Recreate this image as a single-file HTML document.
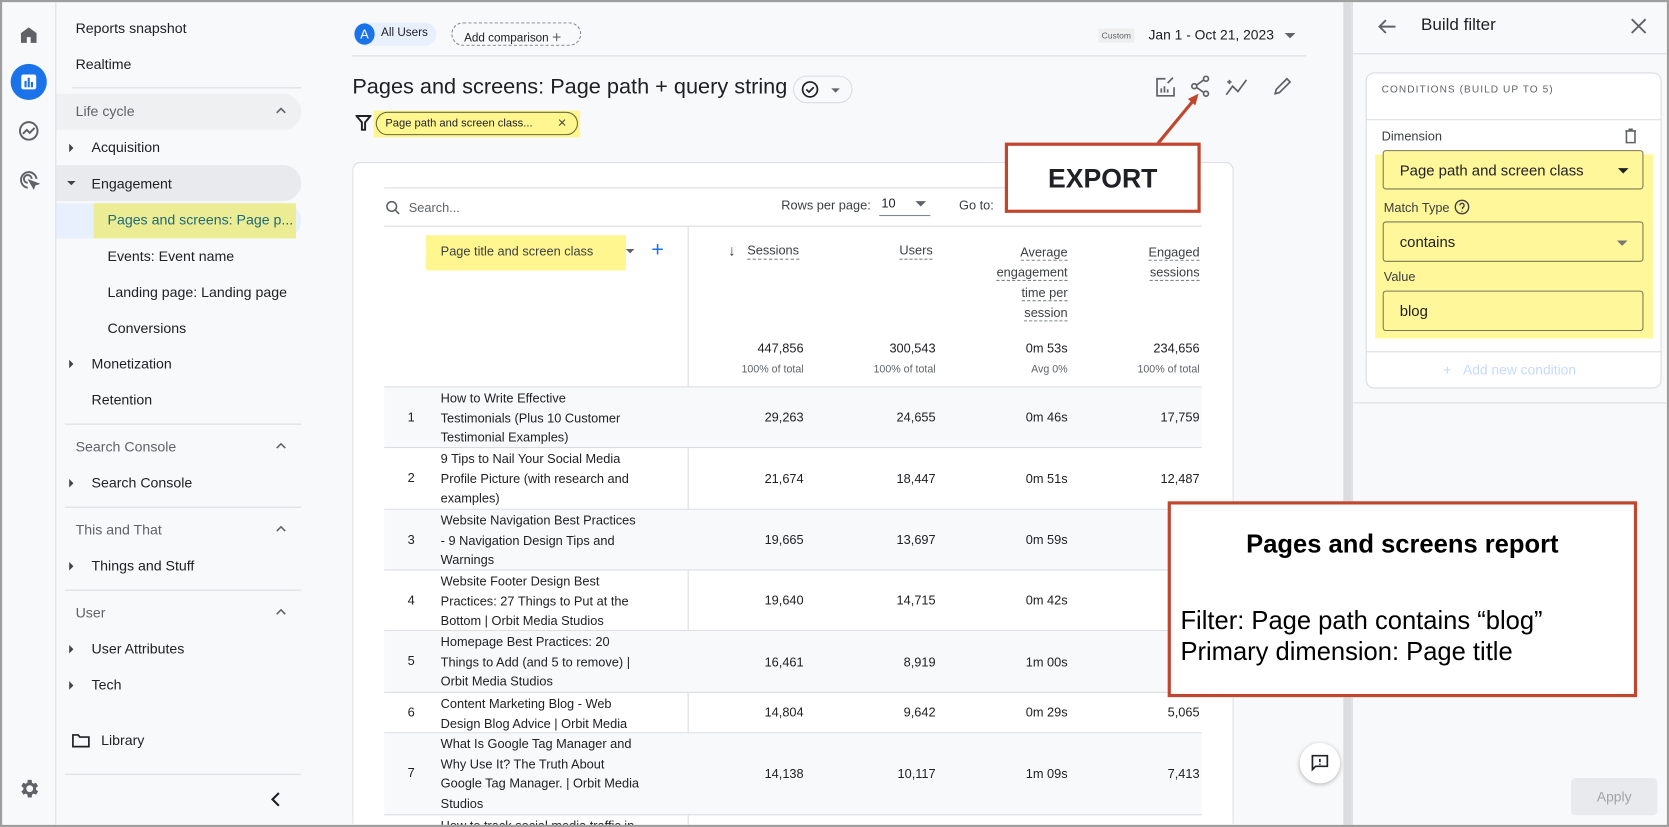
<!DOCTYPE html>
<html><head><meta charset="utf-8"><style>
*{box-sizing:border-box;margin:0;padding:0}
html,body{width:1669px;height:827px;overflow:hidden}
body{font-family:"Liberation Sans",sans-serif;color:#202124;background:#f8f9fa;position:relative}
#wrap{position:absolute;left:0;top:0;width:1568px;height:777px;transform:scale(1.06442,1.06435);transform-origin:0 0;overflow:hidden;background:#f8f9fa}
.abs{position:absolute}
.frame{position:absolute;left:0;top:0;width:1568px;height:777px;border:2px solid #9e9e9e;pointer-events:none;z-index:50}
.nav{left:2px;top:2px;width:51px;height:773px;background:#f8f9fa;border-right:1px solid #dadce0}
.side{left:53px;top:2px;width:240px;height:773px;background:#f8f9fa}
.si{position:absolute;font-size:13.3px;color:#202124}
.sh{position:absolute;font-size:13.3px;color:#5f6368}
.tri{position:absolute;width:0;height:0}
.hr{position:absolute;height:1px;background:#dadce0}
.card{left:331px;top:152px;width:828px;height:622px;background:#fff;border:1px solid #dadce0;border-bottom:none;border-radius:8px 8px 0 0}
.t{position:absolute;font-size:12px;color:#202124}
.r{text-align:right}
.row{position:absolute;left:361px;width:768px;border-bottom:1px solid #dadce0}
.ttl{position:absolute;left:53px;font-size:12px;line-height:18.7px;white-space:nowrap}
.num{position:absolute;font-size:12px;text-align:right;width:100px}
.dash{border-bottom:1px dashed #80868b}
</style></head><body><div id="wrap">

<div class="abs nav">
 <svg class="abs" style="left:14px;top:20px" width="22" height="22" viewBox="0 0 24 24"><path d="M4 20V10l8-6 8 6v10h-6v-6h-4v6z" fill="#5f6368"/></svg>
 <div class="abs" style="left:8px;top:58px;width:34px;height:34px;border-radius:50%;background:#1a73e8"></div>
 <svg class="abs" style="left:15px;top:65px" width="20" height="20" viewBox="0 0 20 20"><rect x="3" y="3" width="14" height="14" rx="2" fill="#fff"/><rect x="6" y="9" width="2" height="6" fill="#1a73e8"/><rect x="9" y="6" width="2" height="9" fill="#1a73e8"/><rect x="12" y="10" width="2" height="5" fill="#1a73e8"/></svg>
 <svg class="abs" style="left:14px;top:110px" width="22" height="22" viewBox="0 0 24 24" fill="none" stroke="#5f6368" stroke-width="2"><circle cx="12" cy="12" r="9"/><path d="M6 15l4-4 3 3 5-5"/></svg>
 <svg class="abs" style="left:14px;top:156px" width="22" height="22" viewBox="0 0 24 24" fill="none" stroke="#5f6368" stroke-width="2"><path d="M20 11a8 8 0 1 0-9 9"/><path d="M15 11a4 4 0 1 0-4 4"/><path d="M13 13l8 3-3 1-1 3z" fill="#5f6368"/></svg>
 <svg class="abs" style="left:14px;top:728px" width="22" height="22" viewBox="0 0 24 24"><path fill="#5f6368" d="M19.4 13a7.5 7.5 0 0 0 0-2l2.1-1.6-2-3.5-2.5 1a7 7 0 0 0-1.7-1L15 3h-4l-.4 2.9a7 7 0 0 0-1.7 1l-2.5-1-2 3.5L6.6 11a7.5 7.5 0 0 0 0 2l-2.1 1.6 2 3.5 2.5-1a7 7 0 0 0 1.7 1L11 21h4l.4-2.9a7 7 0 0 0 1.7-1l2.5 1 2-3.5zM13 15.5A3.5 3.5 0 1 1 13 8.5a3.5 3.5 0 0 1 0 7z"/></svg>
</div>

<div class="abs side">
 <div class="si" style="left:18px;top:17px">Reports snapshot</div>
 <div class="si" style="left:18px;top:51px">Realtime</div>
 <div class="hr" style="left:15px;top:80px;width:215px"></div>
 <div class="abs" style="left:0;top:86px;width:230px;height:34px;background:#eef0f2;border-radius:0 17px 17px 0"></div>
 <div class="sh" style="left:18px;top:95px">Life cycle</div>
 <svg class="abs" style="left:205px;top:97px" width="12" height="10"><path d="M2 7l4-4 4 4" fill="none" stroke="#5f6368" stroke-width="1.5"/></svg>
 <div class="tri" style="left:12px;top:133px;border-left:4px solid #444;border-top:4px solid transparent;border-bottom:4px solid transparent"></div>
 <div class="si" style="left:33px;top:129px">Acquisition</div>
 <div class="abs" style="left:0;top:153px;width:230px;height:34px;background:#e8eaed;border-radius:0 17px 17px 0"></div>
 <div class="tri" style="left:10px;top:168px;border-top:4px solid #444;border-left:4px solid transparent;border-right:4px solid transparent"></div>
 <div class="si" style="left:33px;top:163px">Engagement</div>
 <div class="abs" style="left:0;top:189px;width:230px;height:33px;background:#e8f0fe;border-radius:0 17px 17px 0"></div>
 <div class="abs" style="left:35px;top:189px;width:190px;height:33px;background:#ecec94"></div>
 <div class="si" style="left:48px;top:197px;color:#1e6a7a">Pages and screens: Page p...</div>
 <div class="si" style="left:48px;top:231px">Events: Event name</div>
 <div class="si" style="left:48px;top:265px">Landing page: Landing page</div>
 <div class="si" style="left:48px;top:299px">Conversions</div>
 <div class="tri" style="left:12px;top:336px;border-left:4px solid #444;border-top:4px solid transparent;border-bottom:4px solid transparent"></div>
 <div class="si" style="left:33px;top:332px">Monetization</div>
 <div class="si" style="left:33px;top:366px">Retention</div>
 <div class="hr" style="left:8px;top:396px;width:222px"></div>
 <div class="sh" style="left:18px;top:410px">Search Console</div>
 <svg class="abs" style="left:205px;top:412px" width="12" height="10"><path d="M2 7l4-4 4 4" fill="none" stroke="#5f6368" stroke-width="1.5"/></svg>
 <div class="tri" style="left:12px;top:448px;border-left:4px solid #444;border-top:4px solid transparent;border-bottom:4px solid transparent"></div>
 <div class="si" style="left:33px;top:444px">Search Console</div>
 <div class="hr" style="left:8px;top:474px;width:222px"></div>
 <div class="sh" style="left:18px;top:488px">This and That</div>
 <svg class="abs" style="left:205px;top:490px" width="12" height="10"><path d="M2 7l4-4 4 4" fill="none" stroke="#5f6368" stroke-width="1.5"/></svg>
 <div class="tri" style="left:12px;top:526px;border-left:4px solid #444;border-top:4px solid transparent;border-bottom:4px solid transparent"></div>
 <div class="si" style="left:33px;top:522px">Things and Stuff</div>
 <div class="hr" style="left:8px;top:552px;width:222px"></div>
 <div class="sh" style="left:18px;top:566px">User</div>
 <svg class="abs" style="left:205px;top:568px" width="12" height="10"><path d="M2 7l4-4 4 4" fill="none" stroke="#5f6368" stroke-width="1.5"/></svg>
 <div class="tri" style="left:12px;top:604px;border-left:4px solid #444;border-top:4px solid transparent;border-bottom:4px solid transparent"></div>
 <div class="si" style="left:33px;top:600px">User Attributes</div>
 <div class="tri" style="left:12px;top:638px;border-left:4px solid #444;border-top:4px solid transparent;border-bottom:4px solid transparent"></div>
 <div class="si" style="left:33px;top:634px">Tech</div>
 <svg class="abs" style="left:14px;top:686px" width="18" height="16" viewBox="0 0 18 16"><path d="M1.5 2.5h5l1.5 2h8.5v9h-15z" fill="none" stroke="#202124" stroke-width="1.6"/></svg>
 <div class="si" style="left:42px;top:686px">Library</div>
 <div class="hr" style="left:8px;top:725px;width:222px"></div>
 <svg class="abs" style="left:200px;top:741px" width="12" height="16"><path d="M9 2L3 8l6 6" fill="none" stroke="#202124" stroke-width="2"/></svg>
</div>

<!-- top bar -->
<div class="abs" style="left:332px;top:21px;width:78px;height:22px;background:#e8f0fe;border-radius:11px"></div>
<div class="abs" style="left:333px;top:22px;width:19px;height:20px;border-radius:50%;background:#1a73e8;color:#fff;font-size:12px;text-align:center;line-height:20px">A</div>
<div class="t" style="left:358px;top:25px;font-size:11px">All Users</div>
<div class="abs" style="left:424px;top:21px;width:122px;height:22px;border:1px dashed #80868b;border-radius:11px;font-size:11px;padding:4px 0 0 11px;white-space:nowrap">Add comparison <span style="font-size:15px;color:#5f6368;position:relative;top:1px">+</span></div>
<div class="abs" style="left:1032px;top:27px;font-size:8px;color:#5f6368;background:#eee;padding:2px 3px">Custom</div>
<div class="t" style="left:1079px;top:25px;font-size:13px">Jan 1 - Oct 21, 2023</div>
<div class="tri" style="left:1207px;top:31px;border-top:5px solid #5f6368;border-left:5px solid transparent;border-right:5px solid transparent"></div>
<div class="hr" style="left:331px;top:52px;width:896px"></div>

<div class="t" style="left:331px;top:71px;font-size:20.4px;white-space:nowrap">Pages and screens: Page path + query string</div>
<div class="abs" style="left:745px;top:71px;width:56px;height:26px;border:1px solid #dadce0;border-radius:13px"></div>
<svg class="abs" style="left:752px;top:75px" width="18" height="18" viewBox="0 0 18 18"><circle cx="9" cy="9" r="7" fill="none" stroke="#202124" stroke-width="1.6"/><path d="M5.5 9l2.5 2.5 4.5-4.5" fill="none" stroke="#202124" stroke-width="1.6"/></svg>
<div class="tri" style="left:781px;top:83px;border-top:4px solid #5f6368;border-left:4px solid transparent;border-right:4px solid transparent"></div>
<svg class="abs" style="left:334px;top:107px" width="15" height="16"><path d="M1 2h13L9 8v7H6V8z" fill="none" stroke="#202124" stroke-width="1.8"/></svg>
<div class="abs" style="left:351px;top:104px;width:194px;height:25px;background:#fff68f"></div>
<div class="abs" style="left:353px;top:105px;width:190px;height:22px;border:1px solid #6b6b3a;border-radius:11px;font-size:10.5px;padding:4px 0 0 8px;white-space:nowrap">Page path and screen class...</div>
<div class="t" style="left:524px;top:107px;font-size:14px;color:#444">×</div>

<svg class="abs" style="left:1085px;top:72px" width="20" height="20" viewBox="0 0 20 20" fill="none" stroke="#5f6368" stroke-width="1.6"><path d="M10 2H2v16h16V10"/><path d="M6 15v-4M9 15V9M12 15v-3M12 6l5-5"/></svg>
<svg class="abs" style="left:1118px;top:70px" width="20" height="22" viewBox="0 0 20 22" fill="none" stroke="#5f6368" stroke-width="1.6"><circle cx="15" cy="4" r="2.3"/><circle cx="4" cy="11" r="2.3"/><circle cx="15" cy="18" r="2.3"/><path d="M6 10l7-5M6 12l7 5"/></svg>
<svg class="abs" style="left:1150px;top:72px" width="24" height="20" viewBox="0 0 24 20" fill="none" stroke="#5f6368" stroke-width="1.6"><path d="M2 17l6-8 5 5 8-11"/><path d="M3 5h4M5 3v4"/></svg>
<svg class="abs" style="left:1195px;top:71px" width="20" height="20" viewBox="0 0 20 20" fill="none" stroke="#5f6368" stroke-width="1.6"><path d="M3 17l1-4L14 3l3 3L7 16z"/></svg>

<!-- card -->
<div class="abs card"></div>
<div class="hr" style="left:361px;top:176px;width:768px"></div>
<svg class="abs" style="left:362px;top:188px" width="14" height="14" fill="none" stroke="#5f6368" stroke-width="1.5"><circle cx="6" cy="6" r="4.5"/><path d="M9.5 9.5L13 13"/></svg>
<div class="t" style="left:384px;top:188px;color:#5f6368">Search...</div>
<div class="t" style="left:734px;top:186px;color:#3c4043">Rows per page:</div>
<div class="t" style="left:828px;top:184px">10</div>
<div class="hr" style="left:826px;top:202px;width:48px;background:#80868b"></div>
<div class="tri" style="left:860px;top:189px;border-top:5px solid #5f6368;border-left:5px solid transparent;border-right:5px solid transparent"></div>
<div class="t" style="left:901px;top:186px;color:#3c4043">Go to:</div>
<div class="hr" style="left:361px;top:212px;width:768px"></div>
<div class="abs" style="left:646px;top:213px;width:1px;height:562px;background:#dadce0"></div>

<div class="abs" style="left:400px;top:221px;width:188px;height:33px;background:#fff68f"></div>
<div class="t" style="left:414px;top:229px;color:#3c4043">Page title and screen class</div>
<div class="tri" style="left:588px;top:234px;border-top:4px solid #5f6368;border-left:4px solid transparent;border-right:4px solid transparent"></div>
<div class="t" style="left:612px;top:224px;font-size:20px;color:#1a73e8">+</div>

<div class="t" style="left:684px;top:227px;font-size:14px;color:#3c4043">↓</div>
<div class="t dash" style="left:702px;top:228px;color:#3c4043;line-height:15px">Sessions</div>
<div class="t dash" style="left:845px;top:228px;color:#3c4043;line-height:15px">Users</div>
<div class="t r" style="left:900px;top:228px;width:103px;color:#3c4043;line-height:19px"><span class="dash">Average</span><br><span class="dash">engagement</span><br><span class="dash">time per</span><br><span class="dash">session</span></div>
<div class="t r" style="left:1030px;top:228px;width:97px;color:#3c4043;line-height:19px"><span class="dash">Engaged</span><br><span class="dash">sessions</span></div>

<div class="num" style="left:655px;top:320px">447,856</div>
<div class="num" style="left:779px;top:320px">300,543</div>
<div class="num" style="left:903px;top:320px">0m 53s</div>
<div class="num" style="left:1027px;top:320px">234,656</div>
<div class="num" style="left:655px;top:342px;font-size:10px;color:#5f6368">100% of total</div>
<div class="num" style="left:779px;top:342px;font-size:10px;color:#5f6368">100% of total</div>
<div class="num" style="left:903px;top:342px;font-size:10px;color:#5f6368">Avg 0%</div>
<div class="num" style="left:1027px;top:342px;font-size:10px;color:#5f6368">100% of total</div>
<div class="hr" style="left:361px;top:363px;width:768px"></div>

<!-- rows -->
<div class="row" style="top:364px;height:57px;background:#f8f9fa"><div class="t" style="left:22px;top:21px">1</div><div class="ttl" style="top:1px">How to Write Effective<br>Testimonials (Plus 10 Customer<br>Testimonial Examples)</div></div>
<div class="row" style="top:421px;height:58px"><div class="t" style="left:22px;top:21px">2</div><div class="ttl" style="top:1px">9 Tips to Nail Your Social Media<br>Profile Picture (with research and<br>examples)</div></div>
<div class="row" style="top:479px;height:57px;background:#f8f9fa"><div class="t" style="left:22px;top:21px">3</div><div class="ttl" style="top:1px">Website Navigation Best Practices<br>- 9 Navigation Design Tips and<br>Warnings</div></div>
<div class="row" style="top:536px;height:57px"><div class="t" style="left:22px;top:21px">4</div><div class="ttl" style="top:1px">Website Footer Design Best<br>Practices: 27 Things to Put at the<br>Bottom | Orbit Media Studios</div></div>
<div class="row" style="top:593px;height:58px;background:#f8f9fa"><div class="t" style="left:22px;top:21px">5</div><div class="ttl" style="top:1px">Homepage Best Practices: 20<br>Things to Add (and 5 to remove) |<br>Orbit Media Studios</div></div>
<div class="row" style="top:651px;height:38px"><div class="t" style="left:22px;top:11px">6</div><div class="ttl" style="top:1px">Content Marketing Blog - Web<br>Design Blog Advice | Orbit Media</div></div>
<div class="row" style="top:689px;height:77px;background:#f8f9fa"><div class="t" style="left:22px;top:30px">7</div><div class="ttl" style="top:1px">What Is Google Tag Manager and<br>Why Use It? The Truth About<br>Google Tag Manager. | Orbit Media<br>Studios</div></div>
<div class="row" style="top:766px;height:9px;border-bottom:none;overflow:hidden"><div class="ttl" style="top:1px">How to track social media traffic in</div></div>

<div class="num" style="left:655px;top:385px">29,263</div><div class="num" style="left:779px;top:385px">24,655</div><div class="num" style="left:903px;top:385px">0m 46s</div><div class="num" style="left:1027px;top:385px">17,759</div>
<div class="num" style="left:655px;top:443px">21,674</div><div class="num" style="left:779px;top:443px">18,447</div><div class="num" style="left:903px;top:443px">0m 51s</div><div class="num" style="left:1027px;top:443px">12,487</div>
<div class="num" style="left:655px;top:500px">19,665</div><div class="num" style="left:779px;top:500px">13,697</div><div class="num" style="left:903px;top:500px">0m 59s</div><div class="num" style="left:1027px;top:500px">1</div>
<div class="num" style="left:655px;top:557px">19,640</div><div class="num" style="left:779px;top:557px">14,715</div><div class="num" style="left:903px;top:557px">0m 42s</div><div class="num" style="left:1027px;top:557px">1</div>
<div class="num" style="left:655px;top:615px">16,461</div><div class="num" style="left:779px;top:615px">8,919</div><div class="num" style="left:903px;top:615px">1m 00s</div>
<div class="num" style="left:655px;top:662px">14,804</div><div class="num" style="left:779px;top:662px">9,642</div><div class="num" style="left:903px;top:662px">0m 29s</div><div class="num" style="left:1027px;top:662px">5,065</div>
<div class="num" style="left:655px;top:720px">14,138</div><div class="num" style="left:779px;top:720px">10,117</div><div class="num" style="left:903px;top:720px">1m 09s</div><div class="num" style="left:1027px;top:720px">7,413</div>

<!-- feedback -->
<div class="abs" style="left:1221px;top:698px;width:38px;height:38px;border-radius:50%;background:#fff;box-shadow:0 1px 4px rgba(0,0,0,.3)"></div>
<svg class="abs" style="left:1231px;top:708px" width="18" height="18" viewBox="0 0 18 18" fill="none" stroke="#202124" stroke-width="1.6"><path d="M2 2h14v10H5l-3 3z"/><path d="M9 5v3M9 9.5v1"/></svg>

<!-- right panel -->
<div class="abs" style="left:1262px;top:2px;width:8px;height:773px;background:#dadce0"></div>
<div class="abs" style="left:1270px;top:2px;width:296px;height:773px;background:#f8f9fa;border-left:1px solid #dadce0"></div>
<svg class="abs" style="left:1294px;top:16px" width="18" height="18" fill="none" stroke="#5f6368" stroke-width="1.8"><path d="M17 9H2M8 3L2 9l6 6"/></svg>
<div class="t" style="left:1335px;top:15px;font-size:16px">Build filter</div>
<svg class="abs" style="left:1532px;top:17px" width="15" height="15" fill="none" stroke="#5f6368" stroke-width="1.8"><path d="M1 1l13 13M14 1L1 14"/></svg>
<div class="hr" style="left:1271px;top:50px;width:295px"></div>
<div class="abs" style="left:1283px;top:68px;width:278px;height:297px;background:#fff;border:1px solid #dadce0;border-radius:8px"></div>
<div class="t" style="left:1298px;top:79px;font-size:9.5px;letter-spacing:1px;color:#5f6368">CONDITIONS (BUILD UP TO 5)</div>
<div class="hr" style="left:1284px;top:112px;width:276px"></div>
<div class="t" style="left:1298px;top:121px;font-size:12px;color:#3c4043">Dimension</div>
<svg class="abs" style="left:1525px;top:120px" width="14" height="16" fill="none" stroke="#5f6368" stroke-width="1.5"><path d="M2 3h10M5 1.5h4M3 3v11h8V3"/></svg>
<div class="abs" style="left:1292px;top:145px;width:261px;height:173px;background:#fff799"></div>
<div class="abs" style="left:1299px;top:141px;width:245px;height:37px;border:1px solid #7a7a55;border-radius:3px;font-size:14px;padding:10px 0 0 15px;background:#fff799">Page path and screen class</div>
<div class="tri" style="left:1520px;top:158px;border-top:5px solid #202124;border-left:5px solid transparent;border-right:5px solid transparent"></div>
<div class="t" style="left:1300px;top:188px;font-size:12px;color:#3c4043">Match Type</div>
<svg class="abs" style="left:1366px;top:187px" width="15" height="15" fill="none" stroke="#3c4043" stroke-width="1.3"><circle cx="7.5" cy="7.5" r="6.3"/><path d="M5.5 6a2 2 0 1 1 2.5 2v1.5M7.5 11v1"/></svg>
<div class="abs" style="left:1299px;top:208px;width:245px;height:38px;border:1px solid #7a7a55;border-radius:3px;font-size:14px;padding:10px 0 0 15px">contains</div>
<div class="tri" style="left:1519px;top:226px;border-top:5px solid #777;border-left:5px solid transparent;border-right:5px solid transparent"></div>
<div class="t" style="left:1300px;top:253px;font-size:12px;color:#3c4043">Value</div>
<div class="abs" style="left:1299px;top:273px;width:245px;height:38px;border:1px solid #7a7a55;border-radius:3px;font-size:14px;padding:10px 0 0 15px">blog</div>
<div class="hr" style="left:1284px;top:330px;width:276px"></div>
<div class="t" style="left:1356px;top:340px;font-size:13px;color:#c6dafc">+&nbsp;&nbsp;&nbsp;Add new condition</div>
<div class="hr" style="left:1271px;top:378px;width:295px"></div>
<div class="abs" style="left:1476px;top:731px;width:81px;height:35px;background:#e8eaed;border-radius:4px;color:#a0a4a8;font-size:13px;text-align:center;line-height:35px">Apply</div>

<!-- annotations -->
<svg class="abs" style="left:1080px;top:85px;z-index:20" width="50" height="55"><path d="M6 52L44 6" stroke="#c0462e" stroke-width="3"/><path d="M46 3l-10 5 7 6z" fill="#c0462e"/></svg>
<div class="abs" style="left:944px;top:134px;width:184px;height:66px;background:#fff;border:3px solid #c0462e;font-weight:bold;font-size:25px;text-align:center;line-height:62px;z-index:20">EXPORT</div>
<div class="abs" style="left:1097px;top:471px;width:441px;height:184px;background:#fff;border:3px solid #c0462e;z-index:20;color:#000">
 <div style="position:absolute;left:0;width:100%;top:24px;text-align:center;font-weight:bold;font-size:24px">Pages and screens report</div>
 <div style="position:absolute;left:9px;top:95px;font-size:24px;line-height:29px;white-space:nowrap">Filter: Page path contains “blog”<br>Primary dimension: Page title</div>
</div>

<div class="frame"></div>
</div></body></html>
